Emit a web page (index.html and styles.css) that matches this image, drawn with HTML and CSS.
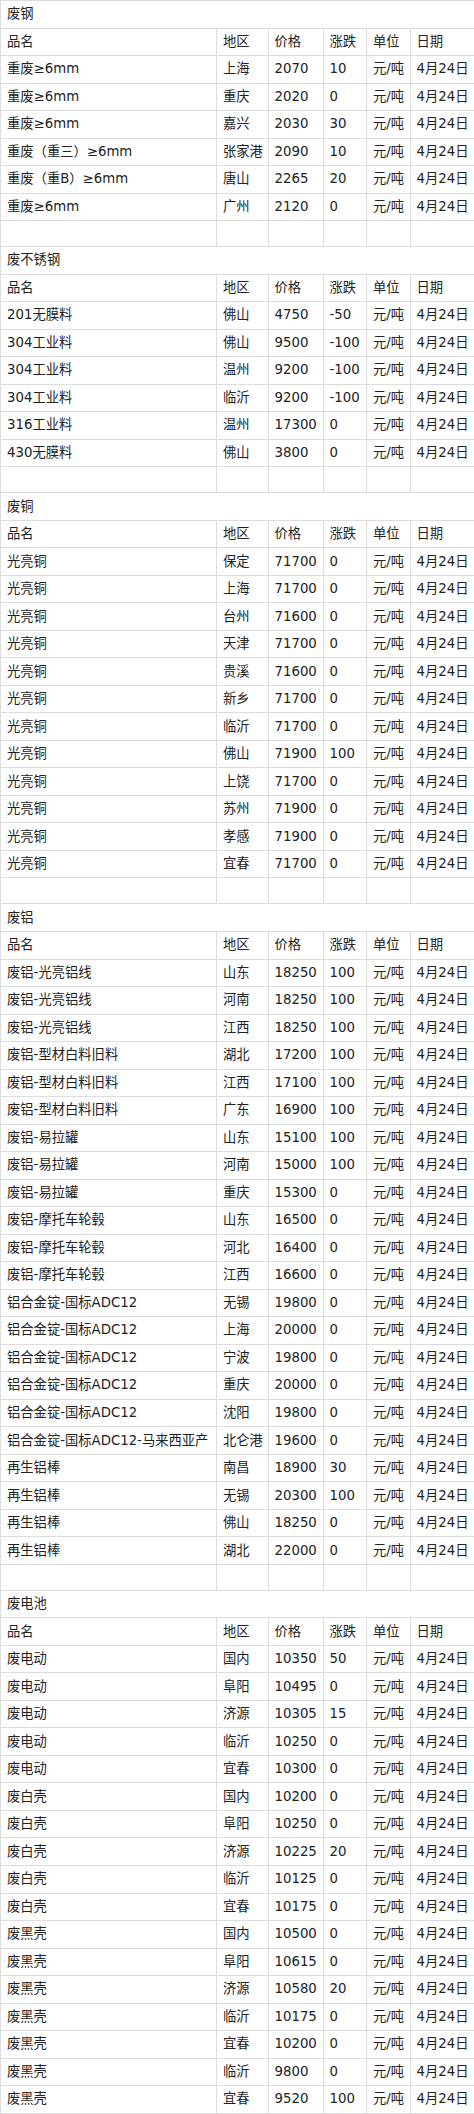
FILE: index.html
```html
<!DOCTYPE html>
<html lang="zh">
<head>
<meta charset="utf-8">
<title>废料价格</title>
<link rel="stylesheet" href="styles.css">
</head>
<body>
<table class="price-table">
<colgroup>
<col class="c-name"><col class="c-area"><col class="c-price"><col class="c-chg"><col class="c-unit"><col class="c-date">
</colgroup>
<tbody>
<tr class="title"><td colspan="6">废钢</td></tr>
<tr><td>品名</td><td>地区</td><td>价格</td><td>涨跌</td><td>单位</td><td>日期</td></tr>
<tr><td>重废≥6mm</td><td>上海</td><td>2070</td><td>10</td><td>元/吨</td><td>4月24日</td></tr>
<tr><td>重废≥6mm</td><td>重庆</td><td>2020</td><td>0</td><td>元/吨</td><td>4月24日</td></tr>
<tr><td>重废≥6mm</td><td>嘉兴</td><td>2030</td><td>30</td><td>元/吨</td><td>4月24日</td></tr>
<tr><td>重废（重三）≥6mm</td><td>张家港</td><td>2090</td><td>10</td><td>元/吨</td><td>4月24日</td></tr>
<tr><td>重废（重B）≥6mm</td><td>唐山</td><td>2265</td><td>20</td><td>元/吨</td><td>4月24日</td></tr>
<tr><td>重废≥6mm</td><td>广州</td><td>2120</td><td>0</td><td>元/吨</td><td>4月24日</td></tr>
<tr class="blank"><td></td><td></td><td></td><td></td><td></td><td></td></tr>

<tr class="title"><td colspan="6">废不锈钢</td></tr>
<tr><td>品名</td><td>地区</td><td>价格</td><td>涨跌</td><td>单位</td><td>日期</td></tr>
<tr><td>201无膜料</td><td>佛山</td><td>4750</td><td>-50</td><td>元/吨</td><td>4月24日</td></tr>
<tr><td>304工业料</td><td>佛山</td><td>9500</td><td>-100</td><td>元/吨</td><td>4月24日</td></tr>
<tr><td>304工业料</td><td>温州</td><td>9200</td><td>-100</td><td>元/吨</td><td>4月24日</td></tr>
<tr><td>304工业料</td><td>临沂</td><td>9200</td><td>-100</td><td>元/吨</td><td>4月24日</td></tr>
<tr><td>316工业料</td><td>温州</td><td>17300</td><td>0</td><td>元/吨</td><td>4月24日</td></tr>
<tr><td>430无膜料</td><td>佛山</td><td>3800</td><td>0</td><td>元/吨</td><td>4月24日</td></tr>
<tr class="blank"><td></td><td></td><td></td><td></td><td></td><td></td></tr>

<tr class="title"><td colspan="6">废铜</td></tr>
<tr><td>品名</td><td>地区</td><td>价格</td><td>涨跌</td><td>单位</td><td>日期</td></tr>
<tr><td>光亮铜</td><td>保定</td><td>71700</td><td>0</td><td>元/吨</td><td>4月24日</td></tr>
<tr><td>光亮铜</td><td>上海</td><td>71700</td><td>0</td><td>元/吨</td><td>4月24日</td></tr>
<tr><td>光亮铜</td><td>台州</td><td>71600</td><td>0</td><td>元/吨</td><td>4月24日</td></tr>
<tr><td>光亮铜</td><td>天津</td><td>71700</td><td>0</td><td>元/吨</td><td>4月24日</td></tr>
<tr><td>光亮铜</td><td>贵溪</td><td>71600</td><td>0</td><td>元/吨</td><td>4月24日</td></tr>
<tr><td>光亮铜</td><td>新乡</td><td>71700</td><td>0</td><td>元/吨</td><td>4月24日</td></tr>
<tr><td>光亮铜</td><td>临沂</td><td>71700</td><td>0</td><td>元/吨</td><td>4月24日</td></tr>
<tr><td>光亮铜</td><td>佛山</td><td>71900</td><td>100</td><td>元/吨</td><td>4月24日</td></tr>
<tr><td>光亮铜</td><td>上饶</td><td>71700</td><td>0</td><td>元/吨</td><td>4月24日</td></tr>
<tr><td>光亮铜</td><td>苏州</td><td>71900</td><td>0</td><td>元/吨</td><td>4月24日</td></tr>
<tr><td>光亮铜</td><td>孝感</td><td>71900</td><td>0</td><td>元/吨</td><td>4月24日</td></tr>
<tr><td>光亮铜</td><td>宜春</td><td>71700</td><td>0</td><td>元/吨</td><td>4月24日</td></tr>
<tr class="blank"><td></td><td></td><td></td><td></td><td></td><td></td></tr>

<tr class="title"><td colspan="6">废铝</td></tr>
<tr><td>品名</td><td>地区</td><td>价格</td><td>涨跌</td><td>单位</td><td>日期</td></tr>
<tr><td>废铝-光亮铝线</td><td>山东</td><td>18250</td><td>100</td><td>元/吨</td><td>4月24日</td></tr>
<tr><td>废铝-光亮铝线</td><td>河南</td><td>18250</td><td>100</td><td>元/吨</td><td>4月24日</td></tr>
<tr><td>废铝-光亮铝线</td><td>江西</td><td>18250</td><td>100</td><td>元/吨</td><td>4月24日</td></tr>
<tr><td>废铝-型材白料旧料</td><td>湖北</td><td>17200</td><td>100</td><td>元/吨</td><td>4月24日</td></tr>
<tr><td>废铝-型材白料旧料</td><td>江西</td><td>17100</td><td>100</td><td>元/吨</td><td>4月24日</td></tr>
<tr><td>废铝-型材白料旧料</td><td>广东</td><td>16900</td><td>100</td><td>元/吨</td><td>4月24日</td></tr>
<tr><td>废铝-易拉罐</td><td>山东</td><td>15100</td><td>100</td><td>元/吨</td><td>4月24日</td></tr>
<tr><td>废铝-易拉罐</td><td>河南</td><td>15000</td><td>100</td><td>元/吨</td><td>4月24日</td></tr>
<tr><td>废铝-易拉罐</td><td>重庆</td><td>15300</td><td>0</td><td>元/吨</td><td>4月24日</td></tr>
<tr><td>废铝-摩托车轮毂</td><td>山东</td><td>16500</td><td>0</td><td>元/吨</td><td>4月24日</td></tr>
<tr><td>废铝-摩托车轮毂</td><td>河北</td><td>16400</td><td>0</td><td>元/吨</td><td>4月24日</td></tr>
<tr><td>废铝-摩托车轮毂</td><td>江西</td><td>16600</td><td>0</td><td>元/吨</td><td>4月24日</td></tr>
<tr><td>铝合金锭-国标ADC12</td><td>无锡</td><td>19800</td><td>0</td><td>元/吨</td><td>4月24日</td></tr>
<tr><td>铝合金锭-国标ADC12</td><td>上海</td><td>20000</td><td>0</td><td>元/吨</td><td>4月24日</td></tr>
<tr><td>铝合金锭-国标ADC12</td><td>宁波</td><td>19800</td><td>0</td><td>元/吨</td><td>4月24日</td></tr>
<tr><td>铝合金锭-国标ADC12</td><td>重庆</td><td>20000</td><td>0</td><td>元/吨</td><td>4月24日</td></tr>
<tr><td>铝合金锭-国标ADC12</td><td>沈阳</td><td>19800</td><td>0</td><td>元/吨</td><td>4月24日</td></tr>
<tr><td>铝合金锭-国标ADC12-马来西亚产</td><td>北仑港</td><td>19600</td><td>0</td><td>元/吨</td><td>4月24日</td></tr>
<tr><td>再生铝棒</td><td>南昌</td><td>18900</td><td>30</td><td>元/吨</td><td>4月24日</td></tr>
<tr><td>再生铝棒</td><td>无锡</td><td>20300</td><td>100</td><td>元/吨</td><td>4月24日</td></tr>
<tr><td>再生铝棒</td><td>佛山</td><td>18250</td><td>0</td><td>元/吨</td><td>4月24日</td></tr>
<tr><td>再生铝棒</td><td>湖北</td><td>22000</td><td>0</td><td>元/吨</td><td>4月24日</td></tr>
<tr class="blank"><td></td><td></td><td></td><td></td><td></td><td></td></tr>

<tr class="title"><td colspan="6">废电池</td></tr>
<tr><td>品名</td><td>地区</td><td>价格</td><td>涨跌</td><td>单位</td><td>日期</td></tr>
<tr><td>废电动</td><td>国内</td><td>10350</td><td>50</td><td>元/吨</td><td>4月24日</td></tr>
<tr><td>废电动</td><td>阜阳</td><td>10495</td><td>0</td><td>元/吨</td><td>4月24日</td></tr>
<tr><td>废电动</td><td>济源</td><td>10305</td><td>15</td><td>元/吨</td><td>4月24日</td></tr>
<tr><td>废电动</td><td>临沂</td><td>10250</td><td>0</td><td>元/吨</td><td>4月24日</td></tr>
<tr><td>废电动</td><td>宜春</td><td>10300</td><td>0</td><td>元/吨</td><td>4月24日</td></tr>
<tr><td>废白壳</td><td>国内</td><td>10200</td><td>0</td><td>元/吨</td><td>4月24日</td></tr>
<tr><td>废白壳</td><td>阜阳</td><td>10250</td><td>0</td><td>元/吨</td><td>4月24日</td></tr>
<tr><td>废白壳</td><td>济源</td><td>10225</td><td>20</td><td>元/吨</td><td>4月24日</td></tr>
<tr><td>废白壳</td><td>临沂</td><td>10125</td><td>0</td><td>元/吨</td><td>4月24日</td></tr>
<tr><td>废白壳</td><td>宜春</td><td>10175</td><td>0</td><td>元/吨</td><td>4月24日</td></tr>
<tr><td>废黑壳</td><td>国内</td><td>10500</td><td>0</td><td>元/吨</td><td>4月24日</td></tr>
<tr><td>废黑壳</td><td>阜阳</td><td>10615</td><td>0</td><td>元/吨</td><td>4月24日</td></tr>
<tr><td>废黑壳</td><td>济源</td><td>10580</td><td>20</td><td>元/吨</td><td>4月24日</td></tr>
<tr><td>废黑壳</td><td>临沂</td><td>10175</td><td>0</td><td>元/吨</td><td>4月24日</td></tr>
<tr><td>废黑壳</td><td>宜春</td><td>10200</td><td>0</td><td>元/吨</td><td>4月24日</td></tr>
<tr><td>废黑壳</td><td>临沂</td><td>9800</td><td>0</td><td>元/吨</td><td>4月24日</td></tr>
<tr><td>废黑壳</td><td>宜春</td><td>9520</td><td>100</td><td>元/吨</td><td>4月24日</td></tr>
</tbody>
</table>
</body>
</html>
```

FILE: styles.css
```css
html, body {
  margin: 0;
  padding: 0;
  background: #ffffff;
}

.price-table {
  width: 474px;
  table-layout: fixed;
  border-collapse: collapse;
  font-family: "DejaVu Sans", "Noto Sans CJK SC", sans-serif;
  font-size: 13.3px;
  color: #222222;
}

.c-name { width: 216px; }
.c-area { width: 51.5px; }
.c-price { width: 55px; }
.c-chg { width: 43.5px; }
.c-unit { width: 43.5px; }
.c-date { width: 64.5px; }

.price-table tr {
  height: 27.52px;
}

.price-table tr.blank {
  height: 26px;
}

.price-table td {
  border: 1px solid #dddddd;
  padding: 0 6px;
  white-space: nowrap;
  overflow: visible;
  vertical-align: middle;
  line-height: 16px;
}

.price-table td:nth-child(5),
.price-table td:nth-child(6) {
  padding: 0 4px 0 6px;
}
```
